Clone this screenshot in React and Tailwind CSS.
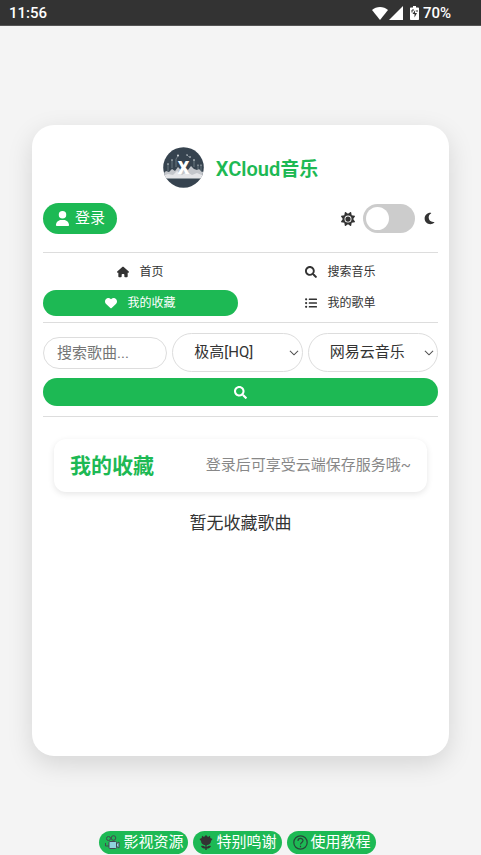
import React, { useState } from 'react';
import { FaUser, FaHouse, FaHeart, FaSun, FaMoon } from 'react-icons/fa6';
import { FaSearch, FaListUl } from 'react-icons/fa';
import { BsChevronDown } from 'react-icons/bs';

const NAV_ITEMS = [
  { id: 'home', label: '首页', Icon: FaHouse },
  { id: 'search', label: '搜索音乐', Icon: FaSearch },
  { id: 'favorites', label: '我的收藏', Icon: FaHeart },
  { id: 'playlists', label: '我的歌单', Icon: FaListUl },
];

const StatusBar = () => (
  <header className="flex h-[26px] items-center justify-between border-b border-[#555] bg-[#333] pl-[9px] pr-[30px] pt-px text-[15px] font-medium leading-5 text-white">
    <span>11:56</span>
    <div className="flex items-center">
      {/* Wifi */}
      <svg width="16" height="13" viewBox="0 0 16 13" fill="currentColor">
        <path d="M8 13 0 3C2.200 1.100 5 0 8 0s5.800 1.100 8 3z" />
      </svg>
      {/* Signal */}
      <svg className="ml-px" width="14" height="14" viewBox="0 0 14 14" fill="currentColor">
        <path d="M14 0v14H0z" />
      </svg>
      {/* Battery */}
      <svg className="ml-[7px] mr-1" width="9" height="14" viewBox="0 0 9 14">
        <path d="M3 0h3v1.500h2.200q.8 0 .8.800v11q0 .7-.8.700H.8q-.8 0-.8-.7v-11q0-.8.800-.8H3z" fill="#fff" />
        <path d="M2 6.500V4h2M7 6V4" stroke="#333" fill="none" />
        <path d="M5.200 4 2.500 8h2v3.500l2.500-4.500h-2z" fill="#333" />
      </svg>
      <span>70%</span>
    </div>
  </header>
);

const Logo = () => (
  <svg width="41" height="41" viewBox="0 0 41 41">
    <defs>
      <clipPath id="logo-clip"><circle cx="20.500" cy="20.500" r="20.300" /></clipPath>
    </defs>
    <g clipPath="url(#logo-clip)">
      <rect width="41" height="41" fill="#36434f" />
      <path d="M0 27l3-3 3 1 3-3 3 2 3-4 3 3 3-3 4 3 3-4 3 3 3 1 2-1 3 3 2-1v7H0z" fill="#c3c6cb" />
      <path d="M0 29l5-2 5 1 4-4 5 4 5-3 5 3 5-2 7 3v3H0z" fill="#e4e5e8" />
      <rect y="31" width="41" height="1" fill="#8d969c" />
      <g stroke="#8f9aa3" strokeWidth="0.600" fill="none">
        <path d="M5 24v-7M9 21v-8M13 20v-8l2-3M31 20v-7M35 23v-5M38 24v-6M26 10l-2-2" />
      </g>
      <g fill="#e4e8ea">
        <circle cx="5" cy="17" r="0.700" />
        <circle cx="9" cy="13" r="0.700" />
        <circle cx="15" cy="8.500" r="0.900" />
        <circle cx="24" cy="8" r="0.700" />
        <circle cx="27" cy="10" r="0.800" />
        <circle cx="31" cy="13" r="0.800" />
        <circle cx="35" cy="18" r="0.600" />
        <circle cx="38" cy="18" r="0.600" />
      </g>
      <text x="20.500" y="27" textAnchor="middle" fontSize="18" fontWeight="900" fill="#fff">X</text>
    </g>
  </svg>
);

const CameraIcon = () => (
  <svg width="15" height="15" viewBox="0 0 15 15" fill="none" stroke="#424b50">
    <circle cx="3.500" cy="3.500" r="2" />
    <circle cx="8.500" cy="3" r="2.300" />
    <path d="M11 9l3-2v6l-3-2" fill="#8fd3dc" />
    <rect x="4" y="6.500" width="7.500" height="7" rx="1" fill="#8fd3dc" />
    <path d="M0.500 8v3H4" />
  </svg>
);

const FlowerIcon = () => (
  <svg width="14" height="15" viewBox="0 0 14 15" fill="#333">
    <path d="M7 0l2 2 2-1.200.3 2.200L13.500 4 12 6c0 2.500-2 4-4.300 4.200v2C9 10.800 10.500 10.500 12 11c-.7 1.800-2.300 2.500-4.300 2.600V15H6.300v-1.400C4.300 13.500 2.700 12.800 2 11c1.500-.5 3-.2 4.300 1.200v-2C4 10 2 8.500 2 6L.5 4l2.200-1L3 .8 5 2z" />
  </svg>
);

const HelpIcon = () => (
  <svg width="15" height="15" viewBox="0 0 15 15" fill="none" stroke="#28463a" strokeWidth="1.200">
    <circle cx="7.500" cy="7.500" r="6.700" />
    <path d="M5 6c0-3.400 5-3.400 5-.4 0 2-2.500 1.900-2.500 4M7.500 10.800v1.400" />
  </svg>
);

const FOOTER_LINKS = [
  { label: '影视资源', Icon: CameraIcon },
  { label: '特别鸣谢', Icon: FlowerIcon },
  { label: '使用教程', Icon: HelpIcon },
];

const SelectBox = ({ label, options }) => (
  <div className="relative min-w-0">
    <select
      aria-label={label}
      className="h-[39px] w-full appearance-none rounded-full border border-[#ddd] bg-white pl-[21px] pr-5 text-[15px] text-[#333]"
    >
      {options.map(o => <option key={o}>{o}</option>)}
    </select>
    <BsChevronDown size={10} className="pointer-events-none absolute right-1 top-[15px] text-[#222]" strokeWidth={0.5} />
  </div>
);

const App = () => {
  const [active, setActive] = useState('favorites');
  const [dark, setDark] = useState(false);

  return (
    <div className="flex min-h-screen flex-col bg-[#f4f4f4] font-[Roboto,'Noto_Sans_CJK_SC',sans-serif] text-[#333]">
      <StatusBar />

      <main className="flex flex-1 flex-col px-8 pb-[75px] pt-[99px]">
        <div className="min-h-[631px] flex-1 rounded-[22px] bg-white px-[11px] pt-[22px] shadow-[0_8px_26px_rgba(0,0,0,0.13)]">
          {/* Brand */}
          <div className="flex items-center justify-center gap-3">
            <Logo />
            <h1 className="pt-[3px] text-[19px] font-bold leading-6 text-[#1db954]">
              <span className="text-xl font-semibold leading-6">XCloud</span>音乐
            </h1>
          </div>

          {/* Login + theme switch */}
          <div className="mt-[15px] flex items-center justify-between">
            <button className="flex h-[31px] items-center gap-[5px] rounded-full bg-[#1db954] px-3 text-[15px] text-white">
              <FaUser size={15} />
              登录
            </button>
            <div className="flex items-center gap-2 pr-[2px]">
              <FaSun size={14} />
              <label className="relative block h-[29px] w-[52px] cursor-pointer">
                <input
                  type="checkbox"
                  aria-label="深色模式"
                  checked={dark}
                  onChange={() => setDark(!dark)}
                  className="peer block h-full w-full appearance-none rounded-full bg-[#ccc]"
                />
                <span className="absolute left-[3px] top-[3px] size-[23px] rounded-full bg-white transition peer-checked:translate-x-[23px]" />
              </label>
              <FaMoon size={13} />
            </div>
          </div>

          {/* Tabs */}
          <nav className="mt-[18px] grid grid-cols-2 gap-[5px] border-y border-[#ddd] py-[6px]">
            {NAV_ITEMS.map(({ id, label, Icon }) => (
              <button
                key={id}
                onClick={() => setActive(id)}
                className={`flex h-[26px] items-center justify-center gap-[10px] rounded-full text-xs ${active === id ? 'bg-[#1db954] text-white' : ''}`}
              >
                <Icon size={12} />
                {label}
              </button>
            ))}
          </nav>

          {/* Search form */}
          <form className="border-b border-[#ddd] py-[10px]" onSubmit={e => e.preventDefault()}>
            <div className="grid grid-cols-[124fr_130fr_130fr] items-center gap-[5px]">
              <input
                type="text"
                aria-label="搜索歌曲"
                placeholder="搜索歌曲..."
                className="h-8 min-w-0 rounded-full border border-[#ddd] bg-white px-[13px] text-[15px] placeholder:text-[#757575]"
              />
              <SelectBox label="音质" options={['极高[HQ]', '标准', '无损[SQ]']} />
              <SelectBox label="音乐平台" options={['网易云音乐', 'QQ音乐']} />
            </div>
            <button
              type="submit"
              aria-label="搜索"
              className="mt-[6px] flex h-7 w-full items-center justify-center rounded-full bg-[#1db954] text-white"
            >
              <FaSearch size={13} />
            </button>
          </form>

          {/* Favorites */}
          <section className="px-[11px] pt-[22px]">
            <div className="flex h-[53px] items-center justify-between rounded-xl bg-white px-4 shadow-[0_2px_6px_rgba(0,0,0,0.1)]">
              <h2 className="pt-[2px] text-[21px] font-bold text-[#1db954]">我的收藏</h2>
              <span className="text-[15px] text-[#888]">登录后可享受云端保存服务哦~</span>
            </div>
            <p className="mt-[19px] text-center text-[17px] leading-6">暂无收藏歌曲</p>
          </section>
        </div>
      </main>

      <footer className="flex justify-center gap-[5px] pb-px pr-[6px]">
        {FOOTER_LINKS.map(({ label, Icon }) => (
          <a key={label} href="#" className="flex h-[23px] items-center gap-[3px] rounded-full bg-[#1db954] pl-[6px] pr-[5px] text-[15px] text-white">
            <Icon />
            {label}
          </a>
        ))}
      </footer>
    </div>
  );
};

export default App;
